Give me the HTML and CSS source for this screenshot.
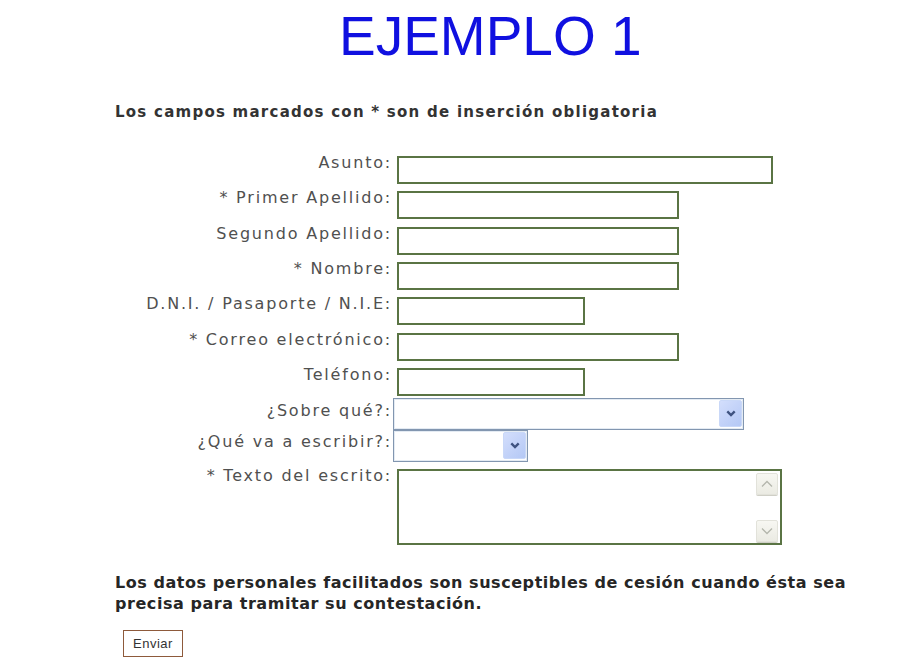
FILE: index.html
```html
<!DOCTYPE html>
<html lang="es">
<head>
<meta charset="utf-8">
<title>Ejemplo 1</title>
<link rel="stylesheet" href="styles.css">
</head>
<body>
<div class="page">
  <h1 class="title">EJEMPLO 1</h1>
  <p class="intro">Los campos marcados con * son de inserción obligatoria</p>
  <form class="form">
    <div class="row"><label class="label">Asunto:</label><input class="field w-xl" type="text"></div>
    <div class="row"><label class="label">* Primer Apellido:</label><input class="field w-md" type="text"></div>
    <div class="row"><label class="label">Segundo Apellido:</label><input class="field w-md" type="text"></div>
    <div class="row"><label class="label">* Nombre:</label><input class="field w-md" type="text"></div>
    <div class="row"><label class="label">D.N.I. / Pasaporte / N.I.E:</label><input class="field w-sm" type="text"></div>
    <div class="row"><label class="label">* Correo electrónico:</label><input class="field w-md" type="text"></div>
    <div class="row"><label class="label">Teléfono:</label><input class="field w-sm" type="text"></div>
    <div class="row row-sel1"><label class="label label-sel">¿Sobre qué?:</label>
      <div class="select sel-wide"><select class="select-native"><option></option></select><span class="drop"><svg width="10" height="7" viewBox="0 0 10 7"><polyline points="1.3,1.4 5,5 8.7,1.4" fill="none" stroke="#3f5380" stroke-width="2.4"/></svg></span></div>
    </div>
    <div class="row row-sel2"><label class="label label-sel2">¿Qué va a escribir?:</label>
      <div class="select sel-narrow"><select class="select-native"><option></option></select><span class="drop"><svg width="10" height="7" viewBox="0 0 10 7"><polyline points="1.3,1.4 5,5 8.7,1.4" fill="none" stroke="#3f5380" stroke-width="2.4"/></svg></span></div>
    </div>
    <div class="row row-text"><label class="label">* Texto del escrito:</label>
      <div class="tbox"><textarea class="tarea"></textarea>
        <div class="scroll">
          <span class="sbtn"><svg width="12" height="8" viewBox="0 0 12 8"><polyline points="1,6.5 6,1.5 11,6.5" fill="none" stroke="#b4b6ac" stroke-width="1.3"/></svg></span>
          <span class="sbtn"><svg width="12" height="8" viewBox="0 0 12 8"><polyline points="1,1.5 6,6.5 11,1.5" fill="none" stroke="#b4b6ac" stroke-width="1.3"/></svg></span>
        </div>
      </div>
    </div>
  </form>
  <p class="note">Los datos personales facilitados son susceptibles de cesión cuando ésta sea precisa para tramitar su contestación.</p>
  <button class="send" type="button">Enviar</button>
</div>
</body>
</html>
```
FILE: styles.css
```css
body {
  margin: 0;
  background: #fff;
}

.page {
  padding-left: 115px;
}

.title {
  margin: 3px 0 0 224px;
  font: 400 55px/66px "Liberation Sans", Arial, sans-serif;
  color: #1010e0;
}

.intro {
  margin: 35px 0 0;
  font: 700 15px/16px "DejaVu Sans", Verdana, sans-serif;
  letter-spacing: 1.25px;
  color: #333;
}

.form {
  margin-top: 36px;
  display: flex;
  flex-direction: column;
}

.row {
  display: flex;
  align-items: flex-start;
  column-gap: 5px;
}

.row + .row {
  margin-top: 7.33px;
}

.row + .row-sel1 {
  margin-top: 2px;
}

.row + .row-sel2 {
  margin-top: 0;
}

.row + .row-text {
  margin-top: 7px;
}

.label {
  flex: none;
  width: 277px;
  text-align: right;
  font: 400 16px/14px "DejaVu Sans", Verdana, sans-serif;
  letter-spacing: 1.8px;
  color: #505050;
  white-space: nowrap;
}

.label-sel {
  padding-top: 6px;
}

.label-sel2 {
  padding-top: 5px;
}

.field {
  box-sizing: border-box;
  height: 28px;
  margin: 0;
  padding: 0 4px;
  border: 2px solid #5a7444;
  background: #fff;
  outline: none;
}

.w-xl { width: 376px; }
.w-md { width: 282px; }
.w-sm { width: 188px; }

.select {
  box-sizing: border-box;
  height: 32px;
  margin-left: -4px;
  padding: 0 1px 0 0;
  display: flex;
  align-items: center;
  border: 1px solid #8296b0;
  box-shadow: inset 0 0 0 1px #e4ebf3;
  background: #fff;
}

.sel-wide { width: 351px; }
.sel-narrow { width: 135px; }

.select-native {
  flex: 1;
  min-width: 0;
  height: 100%;
  border: none;
  background: transparent;
  appearance: none;
  -webkit-appearance: none;
  outline: none;
}

.drop {
  flex: none;
  box-sizing: border-box;
  width: 23px;
  height: 27px;
  display: flex;
  align-items: center;
  justify-content: center;
  border: 1px solid #c9d8f8;
  border-radius: 2px;
  background: linear-gradient(135deg, #d3defc, #b4c8f5);
}

.tbox {
  box-sizing: border-box;
  width: 385px;
  height: 76px;
  display: flex;
  border: 2px solid #5a7444;
  background: #fff;
}

.tarea {
  flex: 1;
  border: none;
  resize: none;
  outline: none;
  background: transparent;
}

.scroll {
  flex: none;
  width: 22px;
  padding: 2px 2px 1px 0;
  display: flex;
  flex-direction: column;
  justify-content: space-between;
}

.sbtn {
  box-sizing: border-box;
  height: 22px;
  display: flex;
  align-items: center;
  justify-content: center;
  border: 1px solid #e2e2da;
  border-radius: 2px;
  background: linear-gradient(#f7f7f2, #ebebe3);
  box-shadow: 0 1px 0 #cfcfc6;
}

.note {
  margin: 27.5px 0 0;
  width: 760px;
  font: 700 16px/21px "DejaVu Sans", Verdana, sans-serif;
  letter-spacing: 0.55px;
  color: #262626;
}

.send {
  display: block;
  margin: 15.5px 0 0 8px;
  width: 60px;
  height: 27px;
  padding: 0;
  border: 1px solid #8e5a3b;
  background: #fff;
  font: 400 13px "Liberation Sans", Arial, sans-serif;
  letter-spacing: 0.5px;
  color: #333;
}
```
